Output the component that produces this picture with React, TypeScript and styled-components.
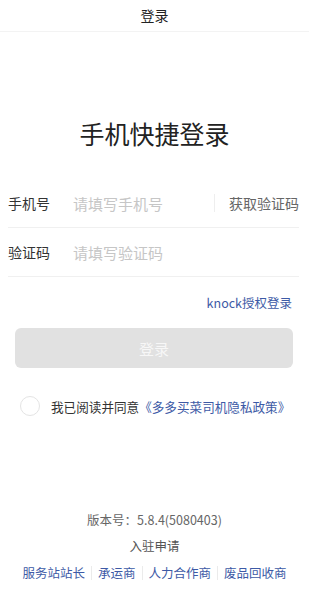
import styled, { createGlobalStyle } from "styled-components";

const GlobalStyle = createGlobalStyle`
  html, body {
    margin: 0;
    padding: 0;
    background: #ffffff;
  }
  body {
    font-family: "Noto Sans CJK SC", "Noto Sans", sans-serif;
    color: #333333;
  }
  * {
    box-sizing: border-box;
  }
`;

const Page = styled.div`
  width: 309px;
  height: 600px;
  display: flex;
  flex-direction: column;
  overflow: hidden;
`;

const Header = styled.div`
  height: 32px;
  line-height: 30px;
  text-align: center;
  font-size: 14px;
  color: #222222;
  border-bottom: 1px solid #f3f3f3;
`;

const Title = styled.h1`
  margin: 84px 0 0;
  font-size: 25px;
  line-height: 34px;
  font-weight: 400;
  color: #222222;
  text-align: center;
`;

const Form = styled.div`
  margin-top: 29px;
  padding: 0 10px 0 8px;
`;

const Row = styled.div`
  height: 49px;
  display: flex;
  align-items: center;
  border-bottom: 1px solid #f0f0f0;
`;

const Label = styled.span`
  width: 65px;
  flex-shrink: 0;
  font-size: 14px;
  color: #333333;
`;

const Input = styled.input`
  flex: 1;
  min-width: 0;
  border: none;
  outline: none;
  padding: 0;
  font-family: inherit;
  font-size: 15px;
  color: #333333;
  background: transparent;

  &::placeholder {
    color: #c6c6c6;
  }
`;

const CodeButton = styled.span`
  display: flex;
  align-items: center;
  font-size: 14px;
  color: #666666;

  &::before {
    content: "";
    width: 1px;
    height: 18px;
    background: #eeeeee;
    margin-right: 14px;
  }
`;

const KnockLink = styled.div`
  margin-top: 16px;
  padding-right: 17px;
  text-align: right;
  font-size: 12.5px;
  line-height: 20px;
  color: #3d5aa6;
`;

const SubmitButton = styled.button`
  margin: 15px 16px 0 15px;
  height: 40px;
  border: none;
  border-radius: 6px;
  background: #e1e1e1;
  color: #f7f7f7;
  font-family: inherit;
  font-size: 15px;
`;

const Agreement = styled.label`
  margin-top: 28px;
  padding-left: 20px;
  display: flex;
  align-items: center;
  font-size: 12.6px;
  color: #333333;
`;

const Radio = styled.span`
  width: 20px;
  height: 20px;
  border-radius: 50%;
  border: 1px solid #e4e4e4;
  margin-right: 11px;
  flex-shrink: 0;
`;

const Policy = styled.span`
  color: #3d5aa6;
`;

const Version = styled.div`
  margin-top: 94px;
  text-align: center;
  font-size: 12.5px;
  line-height: 20px;
  color: #666666;
`;

const Apply = styled.div`
  margin-top: 6px;
  text-align: center;
  font-size: 12.5px;
  line-height: 20px;
  color: #555555;
`;

const FooterLinks = styled.div`
  margin-top: 10px;
  display: flex;
  justify-content: center;
  align-items: center;
`;

const FooterLink = styled.span<{ $first?: boolean }>`
  padding: 0 6px;
  font-size: 12.5px;
  line-height: 14px;
  color: #3d5aa6;
  border-left: ${(p) => (p.$first ? "none" : "1px solid #ebebeb")};
`;

const links = ["服务站站长", "承运商", "人力合作商", "废品回收商"];

export default function App() {
  return (
    <Page>
      <GlobalStyle />
      <Header>登录</Header>
      <Title>手机快捷登录</Title>
      <Form>
        <Row>
          <Label>手机号</Label>
          <Input placeholder="请填写手机号" />
          <CodeButton>获取验证码</CodeButton>
        </Row>
        <Row>
          <Label>验证码</Label>
          <Input placeholder="请填写验证码" />
        </Row>
      </Form>
      <KnockLink>knock授权登录</KnockLink>
      <SubmitButton>登录</SubmitButton>
      <Agreement>
        <Radio />
        我已阅读并同意<Policy>《多多买菜司机隐私政策》</Policy>
      </Agreement>
      <Version>版本号：5.8.4(5080403)</Version>
      <Apply>入驻申请</Apply>
      <FooterLinks>
        {links.map((l, i) => (
          <FooterLink key={l} $first={i === 0}>
            {l}
          </FooterLink>
        ))}
      </FooterLinks>
    </Page>
  );
}
